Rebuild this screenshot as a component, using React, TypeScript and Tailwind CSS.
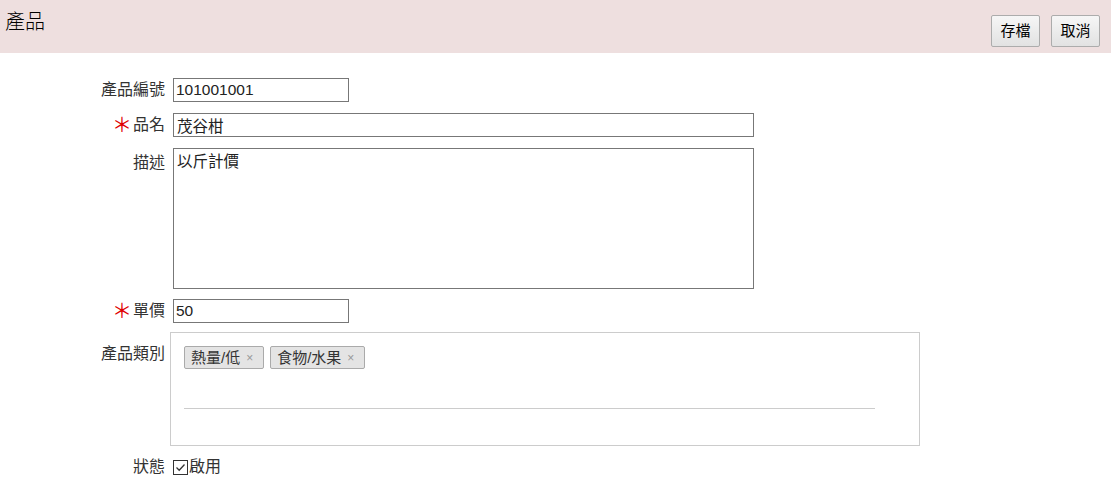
const font = "font-['Liberation_Sans','Noto_Sans_CJK_TC',sans-serif]";

function Header() {
  return (
    <div className="flex h-[53px] items-start justify-between bg-[#eedfdf] pl-[5px] pr-[11px]">
      <h1 className="mt-[8px] text-[20px] font-light leading-[28px] text-black">產品</h1>
      <div className="mt-[15px] flex gap-[11px]">
        <button className="h-[32px] w-[49px] rounded-[2px] border border-[#acacac] bg-gradient-to-b from-[#f6f6f6] to-[#e2e2e2] text-[15px] leading-[30px] text-black">存檔</button>
        <button className="h-[32px] w-[49px] rounded-[2px] border border-[#acacac] bg-gradient-to-b from-[#f6f6f6] to-[#e2e2e2] text-[15px] leading-[30px] text-black">取消</button>
      </div>
    </div>
  );
}

function Label({ text, required, pt = "pt-[1px]" }: { text: string; required?: boolean; pt?: string }) {
  return (
    <div className={`flex items-center justify-end text-[16px] leading-[22px] text-[#333] ${pt}`}>
      {required && <span className="mr-[1px] text-[20px] leading-[22px] text-[#e00000]">＊</span>}
      <span>{text}</span>
    </div>
  );
}

function Tag({ text }: { text: string }) {
  return (
    <span className="flex h-[23px] items-center gap-[6px] rounded-[2px] border border-[#aaa] bg-[#e4e4e4] pl-[6px] pr-[10px] text-[15px] leading-[20px] text-[#333]">
      {text}
      <span className="text-[12px] text-[#999]">×</span>
    </span>
  );
}

export default function App() {
  return (
    <div className={`h-[484px] w-[1111px] bg-white ${font}`}>
      <Header />
      <div className="mt-[25px] grid grid-cols-[165px_1fr] items-start gap-x-[8px]">
        <Label text="產品編號" />
        <input readOnly value="101001001" className="h-[24px] w-[176px] border border-[#777] px-[2px] text-[15.5px] text-[#222] outline-none" />

        <div className="col-span-2 h-[11px]" />
        <Label text="品名" required />
        <input readOnly value="茂谷柑" className="h-[24px] w-[581px] border border-[#777] px-[3px] text-[15.5px] text-[#222] outline-none" />

        <div className="col-span-2 h-[11px]" />
        <Label text="描述" pt="pt-[4px]" />
        <textarea readOnly value="以斤計價" className="h-[141px] w-[581px] resize-none border border-[#777] px-[3px] py-[3px] text-[15.5px] leading-[20px] text-[#222] outline-none" />

        <div className="col-span-2 h-[10px]" />
        <Label text="單價" required />
        <input readOnly value="50" className="h-[24px] w-[176px] border border-[#777] px-[2px] text-[15.5px] text-[#222] outline-none" />

        <div className="col-span-2 h-[9px]" />
        <Label text="產品類別" pt="pt-[11px]" />
        <div className="-ml-[3px] h-[114px] w-[750px] border border-[#ccc] px-[13px] pt-[13px]">
          <div className="flex gap-[6px]">
            <Tag text="熱量/低" />
            <Tag text="食物/水果" />
          </div>
          <div className="mt-[39px] h-px w-[691px] bg-[#ccc]" />
        </div>

        <div className="col-span-2 h-[9px]" />
        <Label text="狀態" />
        <label className="flex items-center gap-[1px] pt-[1px] text-[16px] leading-[22px] text-[#333]">
          <span className="flex h-[15px] w-[15px] items-center justify-center border border-[#333] bg-white">
            <svg width="11" height="9" viewBox="0 0 11 9">
              <path d="M1.5 4.5 L4.2 7.2 L9.5 1.5" fill="none" stroke="#333" strokeWidth="1.3" />
            </svg>
          </span>
          啟用
        </label>
      </div>
    </div>
  );
}
